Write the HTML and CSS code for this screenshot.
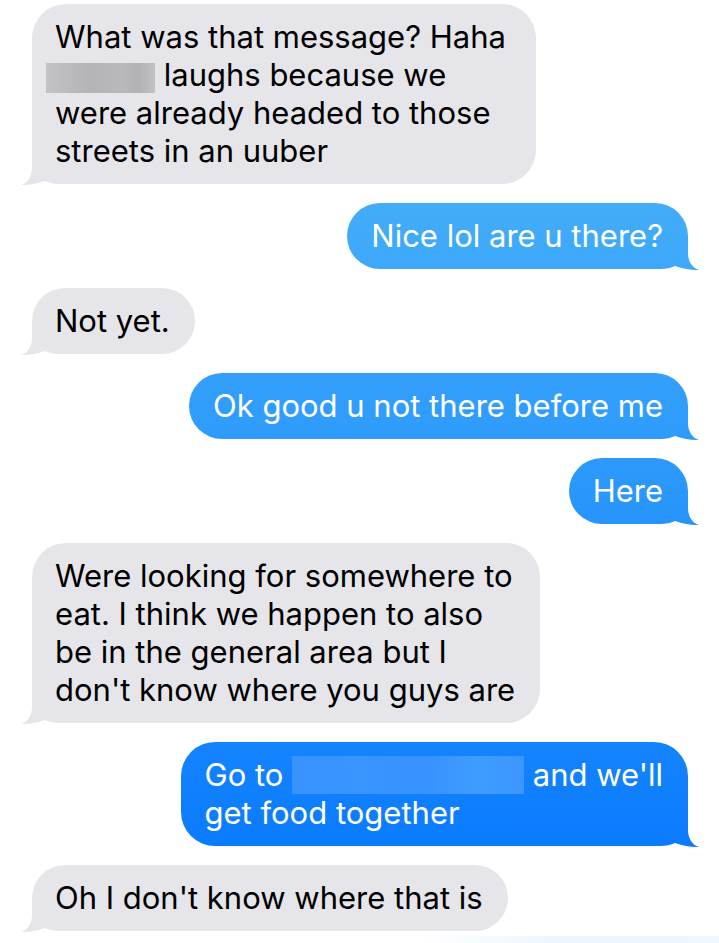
FILE: index.html
```html
<!DOCTYPE html>
<html lang="en">
<head>
  <meta charset="UTF-8" />
  <meta name="viewport" content="width=device-width, initial-scale=1.0"/>
  <title>Messages</title>
  <link rel="stylesheet" href="styles.css">
</head>
<body>
  <div class="thread">
    <div class="msg them wide">What was that message? Haha<br><span class="redact redact-gray"></span> laughs because we<br>were already headed to those<br>streets in an uuber</div>

    <div class="msg me">Nice lol are u there?</div>

    <div class="msg them">Not yet.</div>

    <div class="msg me">Ok good u not there before me</div>

    <div class="msg me">Here</div>

    <div class="msg them wide">Were looking for somewhere to<br>eat. I think we happen to also<br>be in the general area but I<br>don't know where you guys are</div>

    <div class="msg me wide">Go to <span class="redact redact-blue"></span> and we'll<br>get food together</div>

    <div class="msg them">Oh I don't know where that is</div>

    <div class="peek"></div>
  </div>
</body>
</html>
```

FILE: styles.css
```css
body {
  margin: 0;
  background: #fff;
  font-family: Inter, "Noto Sans", sans-serif;
  color: #000;
}

.thread {
  display: flex;
  flex-direction: column;
  gap: 19px;
  padding: 4px 31px 0 32px;
  overflow: hidden;
  height: 939px;
}

.msg {
  position: relative;
  z-index: 0;
  max-width: 480px;
  padding: 14px 25px;
  border-radius: 34px;
  font-size: 31px;
  line-height: 38px;
  white-space: nowrap;
}

.msg.wide {
  min-width: 456px;
}

.them {
  align-self: flex-start;
  padding-left: 23px;
  background: #e5e5ea;
}

.me {
  align-self: flex-end;
  padding-left: 24px;
  color: #fff;
  background: linear-gradient(to bottom, #55bcf8, #0274ff) fixed;
}

/* bubble tails, drawn under the text */
.msg::before {
  content: "";
  position: absolute;
  z-index: -1;
  bottom: -2px;
  width: 46px;
  height: 36px;
}

.them::before {
  left: -12px;
  background: #e5e5ea;
  clip-path: path("M 46 0 L 12 0 L 12 18 C 12 26, 8 33, 1 35 C 8 35.5, 16 34, 25 31 C 29 33, 34 34, 40 34 L 46 34 Z");
}

.me::before {
  right: -12px;
  background: linear-gradient(to bottom, #55bcf8, #0274ff) fixed;
  clip-path: path("M 0 0 L 34 0 L 34 18 C 34 26, 38 33, 45 35 C 38 35.5, 30 34, 21 31 C 17 33, 12 34, 6 34 L 0 34 Z");
}

/* blurred names */
.redact {
  display: inline-block;
}

.redact-gray {
  width: 109px;
  height: 30px;
  margin-left: -9px;
  vertical-align: middle;
  background: linear-gradient(to right, #c3c3c5, #b4b4b7 40%, #b9b9bc 70%, #b2b2b5 85%, #c2c2c4);
}

.redact-blue {
  width: 232px;
  height: 38px;
  vertical-align: top;
  background: linear-gradient(to right, #3893ff, #3a95ff 30%, #3791ff 55%, #3f9cff 80%, #3b96ff);
}

.peek {
  align-self: flex-end;
  width: 300px;
  height: 10px;
  margin-top: -14px;
  margin-right: -31px;
  background: linear-gradient(to right, rgba(236, 246, 254, 0), #ecf6fe 45%, #eef7fe);
}
```
